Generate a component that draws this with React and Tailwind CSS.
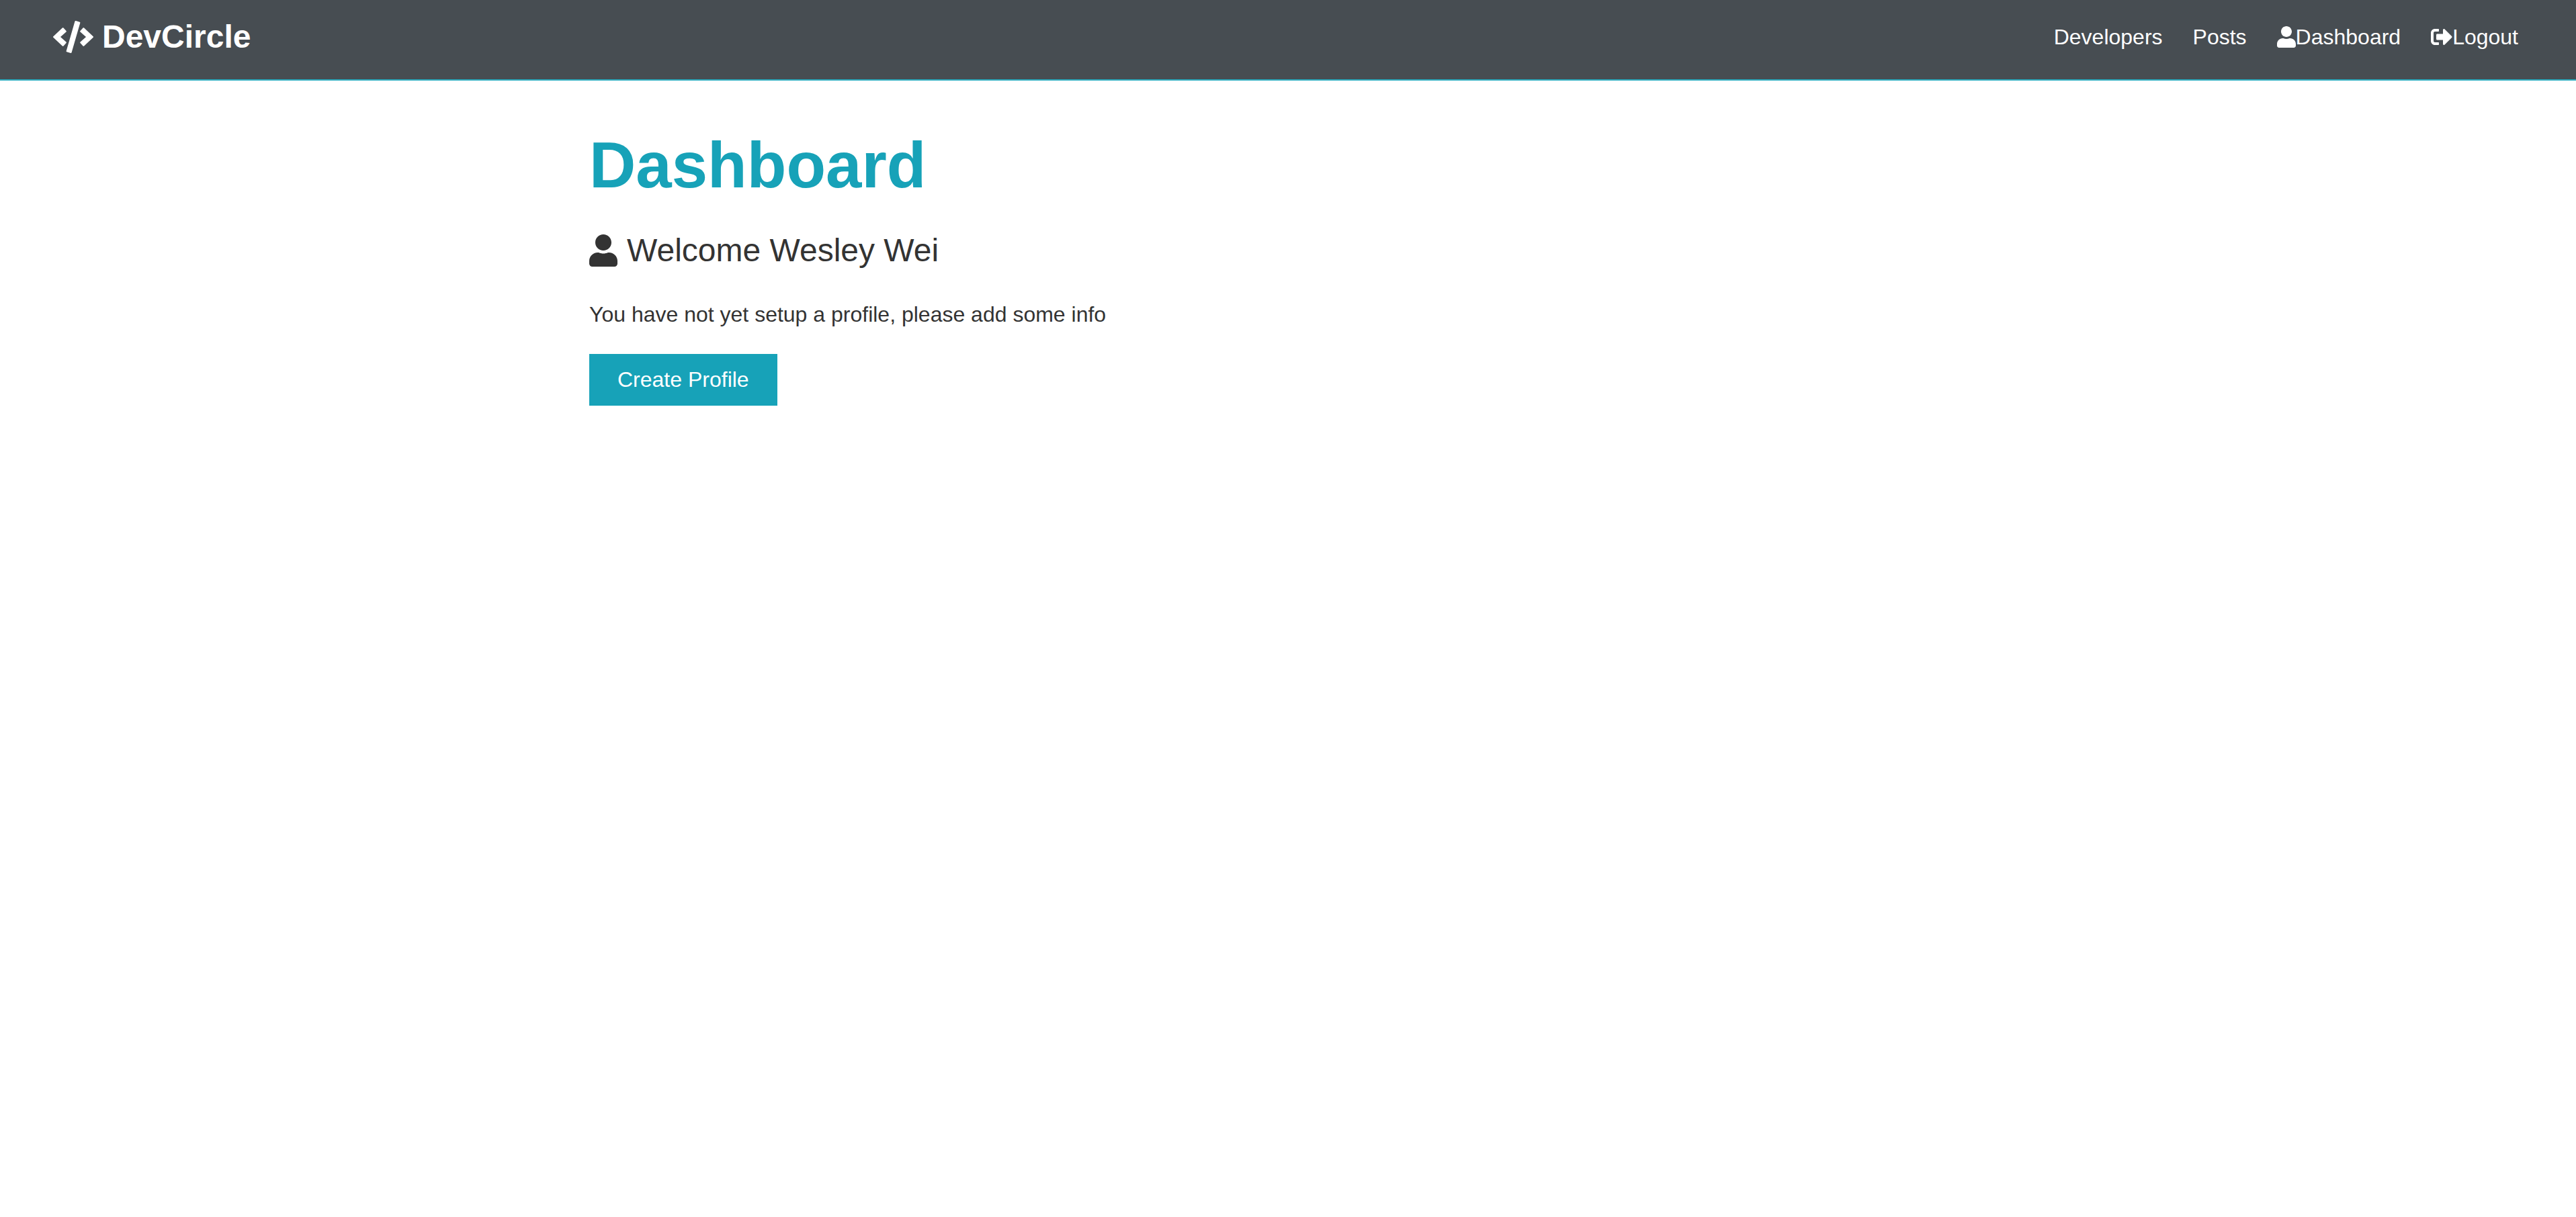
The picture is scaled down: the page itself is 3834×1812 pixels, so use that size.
import { FaCode, FaUser, FaSignOutAlt } from "react-icons/fa";

export default function App() {
  return (
    <div className="min-h-screen bg-white font-['Liberation_Sans',Arial,sans-serif] text-[32px] leading-[51px] text-[#333333]">
      <nav className="flex items-center justify-between border-b-2 border-[#17a2b8] bg-[#343a40] px-16 pt-[19px] pb-[27px] text-white opacity-90">
        <h1 className="flex items-center">
          <a href="#home" className="flex items-center gap-[13px] px-[15px] text-[48px] leading-[72px] font-bold">
            <FaCode className="h-12 w-[60px]" />
            DevCircle
          </a>
        </h1>
        <ul className="flex items-center gap-[45px] pr-[22px]">
          <li><a href="#developers">Developers</a></li>
          <li><a href="#posts">Posts</a></li>
          <li><a href="#dashboard" className="flex items-center"><FaUser className="h-8 w-7" />Dashboard</a></li>
          <li><a href="#logout" className="flex items-center"><FaSignOutAlt className="h-8 w-8" />Logout</a></li>
        </ul>
      </nav>
      <main className="mx-auto max-w-[2208px] px-16 pt-[68px]">
        <h1 className="mb-[31px] text-[96px] leading-[115px] font-bold text-[#17a2b8]">Dashboard</h1>
        <p className="mb-8 flex items-center gap-[14px] text-[48px] leading-[77px]"><FaUser className="h-12 w-[42px]" />Welcome Wesley Wei</p>
        <p className="mb-[33px]">You have not yet setup a profile, please add some info</p>
        <a href="#create-profile" className="inline-block bg-[#17a2b8] px-[42px] py-[13px] text-white">Create Profile</a>
      </main>
    </div>
  );
}
